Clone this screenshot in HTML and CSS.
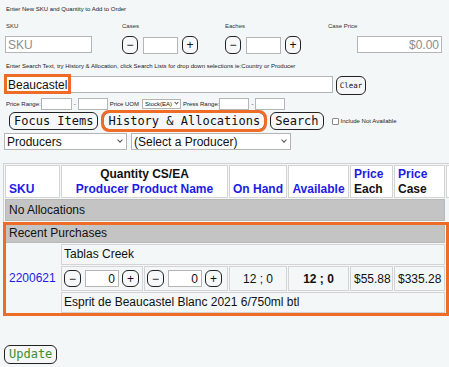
FILE: index.html
```html
<!DOCTYPE html>
<html lang="en">
	<head>
		<meta charset="utf-8">
		<meta name="viewport" content="width=device-width, initial-scale=1.0">
		<title>Add to Order</title>
		<link rel="stylesheet" href="styles.css">
	</head>
	<body>
		<p class="note">Enter New SKU and Quantity to Add to Order</p>
		<div class="fields">
			<div class="field f-sku">
				<label>SKU</label>
				<input class="txt sku" placeholder="SKU">
			</div>
			<div class="field f-qty">
				<label>Cases</label>
				<div class="stepper">
					<button class="step">&minus;</button><input class="txt qty"><button class="step">+</button>
				</div>
			</div>
			<div class="field f-qty">
				<label>Eaches</label>
				<div class="stepper">
					<button class="step">&minus;</button><input class="txt qty"><button class="step">+</button>
				</div>
			</div>
			<div class="field f-price">
				<label>Case Price</label>
				<input class="txt price" placeholder="$0.00">
			</div>
		</div>

		<p class="note note-search">Enter Search Text, try History &amp; Allocation, click Search Lists for drop down selections ie:Country or Producer</p>
		<div class="search-row">
			<div class="search-wrap">
				<input class="txt search" value="Beaucastel">
				<span class="mark mark-word"></span>
			</div>
			<button class="btn clear">Clear</button>
		</div>

		<div class="range-row">
			<span>Price Range:</span><input class="tiny"><span class="dash">-</span><input class="tiny">
			<span class="lbl">Price UOM</span>
			<span class="sel sel-uom"><select><option>Stock(EA)</option></select></span>
			<span class="lbl">Press Range:</span><input class="tiny"><span class="dash">-</span><input class="tiny">
		</div>

		<div class="btn-row">
			<button class="btn">Focus Items</button>
			<button class="btn marked">History &amp; Allocations</button>
			<button class="btn">Search</button>
			<label class="check"><input type="checkbox"><span>Include Not Available</span></label>
		</div>

		<div class="select-row">
			<span class="sel sel-type"><select><option>Producers</option></select></span>
			<span class="sel sel-prod"><select><option>(Select a Producer)</option></select></span>
		</div>

		<div class="grid-wrap">
			<table class="grid">
				<colgroup>
					<col class="c-sku"><col class="c-q1"><col class="c-q2"><col class="c-oh"><col class="c-av"><col class="c-pe"><col class="c-pc"><col class="c-x">
				</colgroup>
				<thead>
					<tr>
						<th class="left"><span class="blue">SKU</span></th>
						<th colspan="2">Quantity CS/EA<br><span class="blue">Producer Product Name</span></th>
						<th><span class="blue">On Hand</span></th>
						<th><span class="blue">Available</span></th>
						<th class="left"><span class="blue">Price</span><br>Each</th>
						<th class="left"><span class="blue">Price</span><br>Case</th>
						<th></th>
					</tr>
				</thead>
				<tbody>
					<tr class="band"><td colspan="7">No Allocations</td></tr>
					<tr class="band recent"><td colspan="7">Recent Purchases</td></tr>
					<tr class="name">
						<td rowspan="3" class="sku-cell">2200621</td>
						<td colspan="6">Tablas Creek</td>
					</tr>
					<tr class="line">
						<td>
							<div class="stepper mini">
								<button class="step">&minus;</button><input class="txt qty" value="0"><button class="step">+</button>
							</div>
						</td>
						<td>
							<div class="stepper mini">
								<button class="step">&minus;</button><input class="txt qty" value="0"><button class="step">+</button>
							</div>
						</td>
						<td class="num">12 ; 0</td>
						<td class="num strong">12 ; 0</td>
						<td class="money">$55.88</td>
						<td class="money">$335.28</td>
					</tr>
					<tr class="name"><td colspan="6">Esprit de Beaucastel Blanc 2021 6/750ml btl</td></tr>
				</tbody>
			</table>
			<div class="mark mark-recent"></div>
		</div>

		<button class="btn update">Update</button>
	</body>
</html>
```

FILE: styles.css
```css
*{
	box-sizing: border-box;
}
html,
body{
	height: 100%;
}
body{
	margin: 0;
	padding: 0 4px;
	overflow: hidden;
	background: #f4f7f8;
	font-family: "Liberation Sans", Arial, sans-serif;
	font-size: 12px;
	color: #111;
}
input,
select,
button{
	font-family: inherit;
	margin: 0;
}

/* 小字说明 */
.note{
	margin: 4px 0 0 2px;
	font-size: 6px;
	line-height: 10px;
	color: #222;
}
.note-search{
	margin-top: 7px;
}

/* 输入行 */
.fields{
	display: flex;
	margin-top: 7px;
}
.field{
	display: flex;
	flex-direction: column;
	gap: 5px;
}
.field label{
	font-size: 6px;
	line-height: 10px;
	color: #333;
}
.f-sku{
	width: 118px;
	padding-left: 1px;
}
.f-sku label{
	padding-left: 1px;
}
.f-qty{
	width: 103px;
}
.f-price{
	width: 114px;
}
.txt{
	height: 17px;
	border: 1px solid #b5b5b5;
	background: #fff;
	font-size: 12px;
	padding: 0 2px;
	color: #111;
}
.txt::placeholder{
	color: #8d8d8d;
}
.sku{
	width: 87px;
}
.price{
	width: 85px;
	margin-left: 29px;
	text-align: right;
}
.stepper{
	display: flex;
	align-items: center;
}
.stepper .qty{
	width: 35px;
	margin: 0 4px 0 5px;
	text-align: right;
}
.step{
	width: 16px;
	height: 18px;
	padding: 0;
	border: 1.5px solid #222;
	border-radius: 6px;
	background: #f6f8f9;
	color: #111;
	font-size: 12px;
	line-height: 14px;
}

/* 按钮 */
.btn{
	font-family: "DejaVu Sans Mono", "Liberation Mono", monospace;
	font-size: 12px;
	line-height: 15px;
	padding: 0 4px;
	border: 1.5px solid #222;
	border-radius: 6px;
	background: #f5f7f8;
	color: #111;
}

/* 搜索 */
.search-row{
	display: flex;
	align-items: flex-start;
	margin-top: 5px;
}
.search-wrap{
	position: relative;
	margin-left: 1px;
}
.search{
	width: 328px;
}
.btn.clear{
	width: 30px;
	height: 19px;
	margin-left: 3px;
	padding: 0;
	font-size: 7.5px;
	line-height: 16px;
}
.mark{
	position: absolute;
	border: 3px solid #ef6c27;
	pointer-events: none;
}
.mark-word{
	left: -1px;
	top: -2px;
	width: 67px;
	height: 20px;
}

/* 价格范围 */
.range-row{
	display: flex;
	align-items: center;
	height: 12px;
	margin-top: 3px;
	padding-left: 2px;
	font-size: 6px;
	color: #222;
}
.tiny{
	width: 30px;
	height: 12px;
	border: 1px solid #b5b5b5;
	background: #fff;
	padding: 0;
}
.range-row .tiny:first-of-type{
	width: 31px;
}
.dash{
	padding: 0 2px;
}
.lbl{
	margin-left: 2px;
}

/* 下拉框 */
.sel{
	position: relative;
	display: inline-block;
}
.sel select{
	appearance: none;
	-webkit-appearance: none;
	width: 100%;
	height: 100%;
	border: 1px solid #b5b5b5;
	border-radius: 0;
	background: #fff;
	color: #111;
	padding: 0 0 0 2px;
}
.sel::after{
	content: "";
	position: absolute;
	width: 3px;
	height: 3px;
	border-right: 1px solid #555;
	border-bottom: 1px solid #555;
	transform: rotate(45deg);
	pointer-events: none;
}
.sel-uom{
	width: 39px;
	height: 10px;
	margin-left: 3px;
}
.sel-uom select{
	font-size: 6px;
	padding-left: 2px;
	line-height: 8px;
}
.sel-uom::after{
	right: 3px;
	top: 2px;
	width: 2px;
	height: 2px;
}

.btn-row{
	display: flex;
	align-items: center;
	gap: 5px;
	margin-top: 2px;
	padding-left: 5px;
}
.btn-row .btn{
	height: 18px;
}
.marked{
	outline: 3px solid #ef6c27;
	outline-offset: -1px;
}
.check{
	display: flex;
	align-items: center;
	gap: 2px;
	margin-left: 3px;
	font-size: 6px;
	color: #222;
}
.check input{
	appearance: none;
	-webkit-appearance: none;
	width: 7px;
	height: 7px;
	margin: 0;
	border: 1px solid #8a8a8a;
	border-radius: 1px;
	background: #fff;
}

.select-row{
	display: flex;
	gap: 4px;
	margin-top: 3px;
}
.sel-type,
.sel-prod{
	height: 17px;
}
.sel-type select,
.sel-prod select{
	font-size: 12px;
}
.sel-type{
	width: 123px;
}
.sel-prod{
	width: 160px;
}
.sel-type::after,
.sel-prod::after{
	right: 5px;
	top: 5px;
}

/* 表格 */
.grid-wrap{
	position: relative;
	margin: 13px 0 0 -1px;
}
.grid{
	table-layout: fixed;
	width: 469px;
	border: 1px solid #d2d2d2;
	border-spacing: 1px;
}
.c-sku{ width: 55px; }
.c-q1{ width: 82px; }
.c-q2{ width: 84px; }
.c-oh{ width: 58px; }
.c-av{ width: 61px; }
.c-pe{ width: 43px; }
.c-pc{ width: 51px; }
.c-x{ width: 24px; }
.grid th,
.grid td{
	border: 1px solid #d4d4d4;
	white-space: nowrap;
	overflow: hidden;
}
.grid th{
	height: 33px;
	padding: 1px 3px 0;
	background: #fff;
	font-size: 12px;
	line-height: 15px;
	vertical-align: bottom;
	text-align: center;
	color: #111;
}
.grid th.left{
	text-align: left;
}
.blue{
	color: #1c1ce6;
}
.band td{
	height: 22px;
	padding: 0 3px;
	background: #c4c4c4;
	border-color: #b9b9b9;
	line-height: 16px;
}
.band.recent td{
	height: 21px;
}
.name td{
	height: 21px;
	padding: 0 2px;
	line-height: 15px;
}
.grid .sku-cell{
	padding: 0 3px;
	border-color: transparent;
	color: #1c1ce6;
	vertical-align: middle;
}
.line td{
	height: 25px;
	padding: 0 2px;
	vertical-align: middle;
}
.mini .step{
	width: 17px;
	height: 17px;
}
.mini .qty{
	width: 34px;
	margin: 0 3px 0 4px;
	padding-right: 3px;
}
.num{
	text-align: center;
}
.strong{
	font-weight: bold;
}
.grid td.money{
	padding: 0 3px;
}
.mark-recent{
	left: 0;
	top: 59px;
	width: 446px;
	height: 94px;
}

.btn.update{
	margin-top: 30px;
	height: 19px;
	color: #3c8f2e;
}
```
